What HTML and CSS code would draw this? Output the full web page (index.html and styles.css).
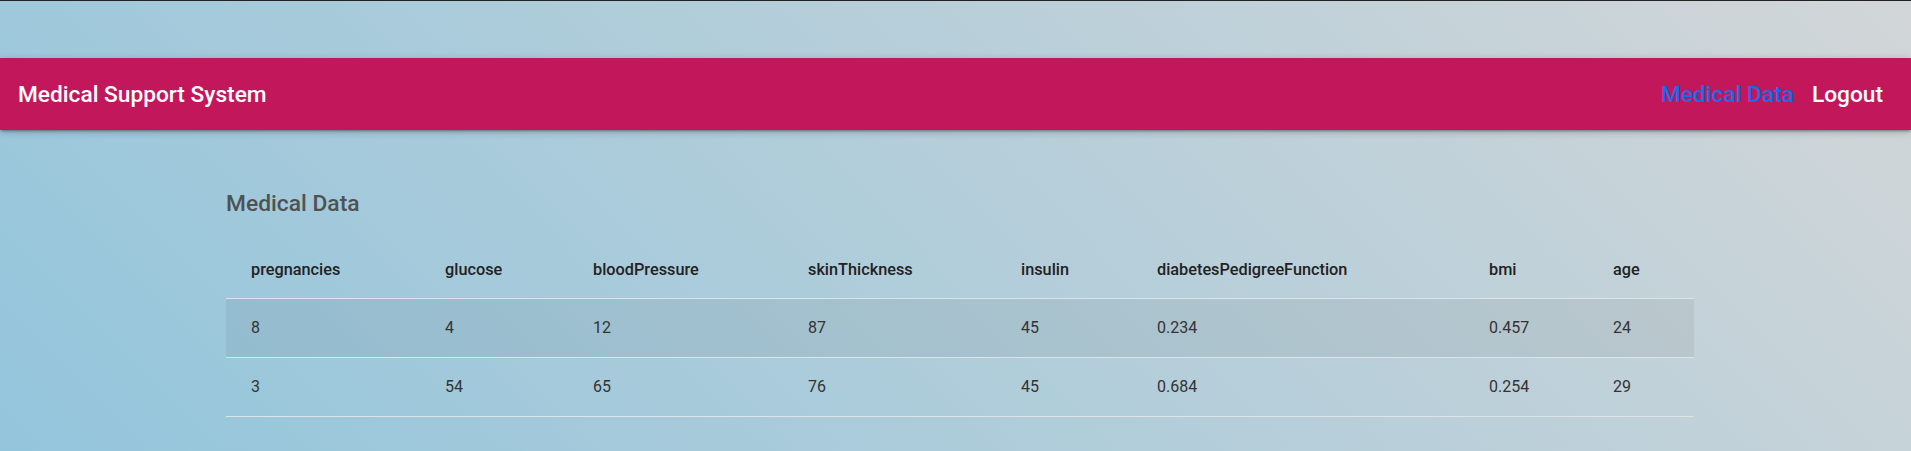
FILE: index.html
```html
<!DOCTYPE html>
<html lang="en">
<head>
<meta charset="utf-8">
<title>Medical Support System</title>
<link rel="stylesheet" href="styles.css">
</head>
<body>
<div class="topline"></div>
<nav class="navbar">
  <a class="brand" href="#">Medical Support System</a>
  <ul class="nav-links">
    <li><a class="active" href="#">Medical Data</a></li>
    <li><a href="#">Logout</a></li>
  </ul>
</nav>
<main class="container">
  <h5 class="title">Medical Data</h5>
  <table class="data-table">
    <colgroup>
      <col class="c1"><col class="c2"><col class="c3"><col class="c4"><col class="c5"><col class="c6"><col class="c7"><col class="c8">
    </colgroup>
    <thead>
      <tr>
        <th>pregnancies</th><th>glucose</th><th>bloodPressure</th><th>skinThickness</th><th>insulin</th><th>diabetesPedigreeFunction</th><th>bmi</th><th>age</th>
      </tr>
    </thead>
    <tbody>
      <tr class="hover">
        <td>8</td><td>4</td><td>12</td><td>87</td><td>45</td><td>0.234</td><td>0.457</td><td>24</td>
      </tr>
      <tr>
        <td>3</td><td>54</td><td>65</td><td>76</td><td>45</td><td>0.684</td><td>0.254</td><td>29</td>
      </tr>
    </tbody>
  </table>
</main>
</body>
</html>
```
FILE: styles.css
```css
html, body {
  margin: 0;
  padding: 0;
}
body {
  min-height: 451px;
  font-family: Roboto, "Liberation Sans", sans-serif;
  background: linear-gradient(45deg, #93c5dc 0%, #d2d6d8 100%);
  background-attachment: fixed;
}
.topline {
  height: 1px;
  background: #222;
}
.navbar {
  margin-top: 57px;
  height: 72px;
  background: #c2185b;
  display: flex;
  align-items: center;
  justify-content: space-between;
  padding: 0 28px 0 18px;
  box-shadow: 0 2px 2px 0 rgba(0,0,0,0.14), 0 3px 1px -2px rgba(0,0,0,0.12), 0 2px 8px 0 rgba(0,0,0,0.2);
}
.brand {
  color: #fff;
  text-decoration: none;
  font-size: 22.7px;
  font-weight: 500;
}
.nav-links {
  list-style: none;
  margin: 0;
  padding: 0;
  display: flex;
  gap: 18px;
}
.nav-links a {
  color: #fff;
  text-decoration: none;
  font-size: 22.7px;
  font-weight: 500;
}
.nav-links a.active {
  color: #1a6be8;
}
.container {
  margin-left: 226px;
  width: 1468px;
}
.title {
  margin: 59px 0 21px 0;
  font-size: 22.8px;
  line-height: 30px;
  font-weight: 500;
  color: #4f5253;
}
.data-table {
  width: 100%;
  border-collapse: collapse;
  table-layout: fixed;
  line-height: 22px;
}
.c1 { width: 194px; }
.c2 { width: 148px; }
.c3 { width: 215px; }
.c4 { width: 213px; }
.c5 { width: 136px; }
.c6 { width: 332px; }
.c7 { width: 124px; }
.c8 { width: 106px; }
.data-table tr {
  border-bottom: 1px solid #dde4e8;
}
.data-table th {
  text-align: left;
  font-size: 16.3px;
  font-weight: 500;
  color: #222;
  padding: 19px 0 17px 25px;
}
.data-table td {
  font-size: 16px;
  color: #333;
  padding: 18px 0 18px 25px;
}
.data-table tr.hover {
  background: rgba(0,0,0,0.05);
}
```
